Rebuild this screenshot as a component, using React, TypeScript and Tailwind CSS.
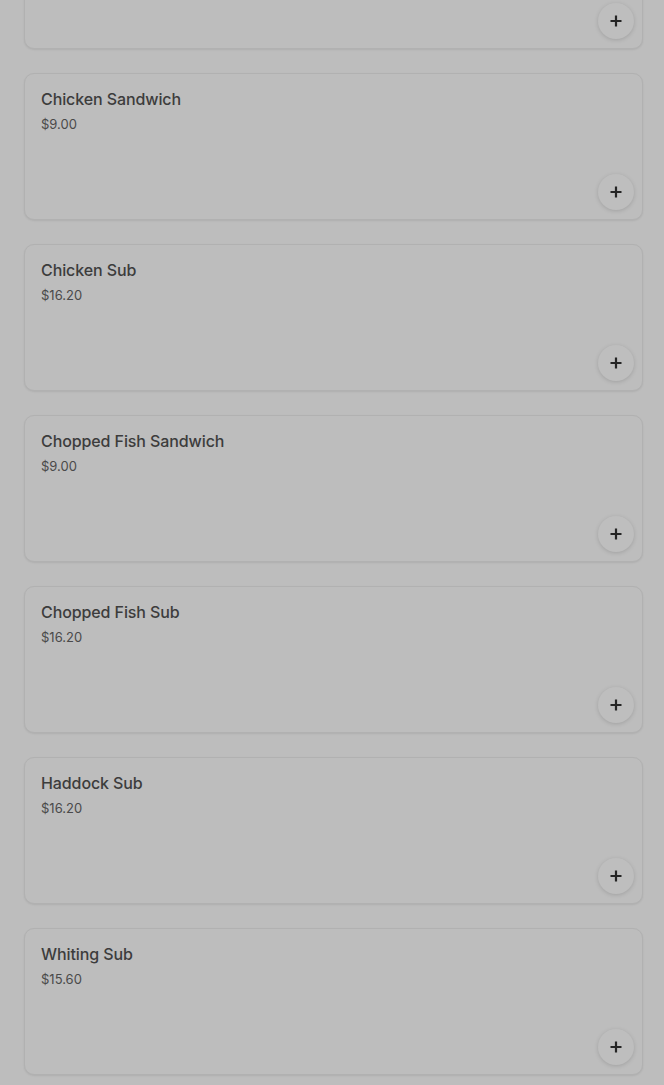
import React from "react";

const items = [
  { name: "Chicken Philly Sub", price: "$16.20" },
  { name: "Chicken Sandwich", price: "$9.00" },
  { name: "Chicken Sub", price: "$16.20" },
  { name: "Chopped Fish Sandwich", price: "$9.00" },
  { name: "Chopped Fish Sub", price: "$16.20" },
  { name: "Haddock Sub", price: "$16.20" },
  { name: "Whiting Sub", price: "$15.60" },
];

function Plus() {
  return (
    <svg width="14" height="14" viewBox="0 0 14 14" fill="none">
      <path d="M7 1.5v11M1.5 7h11" stroke="#252525" strokeWidth="2.2" />
    </svg>
  );
}

export default function App() {
  return (
    <div
      className="min-h-[1085px] bg-[#bdbdbd] overflow-hidden"
      style={{ fontFamily: "Inter, 'Noto Sans', sans-serif" }}
    >
      <div className="mt-[-98px] ml-6 w-[619px] flex flex-col gap-6">
        {items.map((it) => (
          <div
            key={it.name}
            className="h-[147px] rounded-[10px] border border-[#b1b1b1] bg-[#bdbdbd] shadow-[0_1px_2px_rgba(0,0,0,0.08)] flex flex-col"
          >
            <div className="px-4 pt-[15px]">
              <div className="text-[16px] leading-5 font-medium tracking-[-0.1px] text-[#3c3c3c]">{it.name}</div>
              <div className="mt-[5px] text-[13px] leading-5 text-[#4a4a4a]">{it.price}</div>
            </div>
            <div className="mt-auto flex justify-end pr-2 pb-[9px]">
              <div className="w-9 h-9 rounded-full bg-[#bebebe] shadow-[0_1px_4px_rgba(0,0,0,0.15)] flex items-center justify-center">
                <Plus />
              </div>
            </div>
          </div>
        ))}
      </div>
    </div>
  );
}
